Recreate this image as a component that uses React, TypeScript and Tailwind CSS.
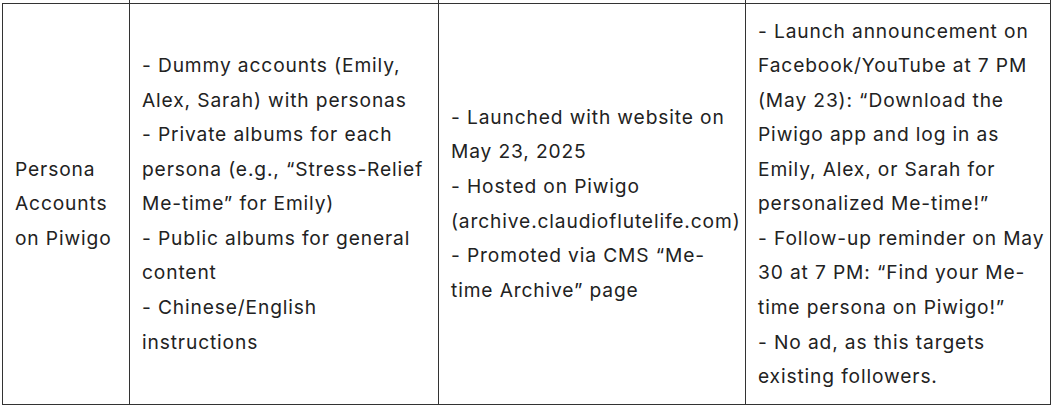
import React from 'react';

// each visual line of the cell, as it wraps in the original
const rows = [
  {
    name: ['Persona', 'Accounts', 'on Piwigo'],
    features: [
      '- Dummy accounts (Emily,',
      'Alex, Sarah) with personas',
      '- Private albums for each',
      'persona (e.g., \u201cStress-Relief',
      'Me-time\u201d for Emily)',
      '- Public albums for general',
      'content',
      '- Chinese/English',
      'instructions',
    ],
    timing: [
      '- Launched with website on',
      'May 23, 2025',
      '- Hosted on Piwigo',
      '(archive.claudioflutelife.com)',
      '- Promoted via CMS \u201cMe-',
      'time Archive\u201d page',
    ],
    promo: [
      '- Launch announcement on',
      'Facebook/YouTube at 7 PM',
      '(May 23): \u201cDownload the',
      'Piwigo app and log in as',
      'Emily, Alex, or Sarah for',
      'personalized Me-time!\u201d',
      '- Follow-up reminder on May',
      '30 at 7 PM: \u201cFind your Me-',
      'time persona on Piwigo!\u201d',
      '- No ad, as this targets',
      'existing followers.',
    ],
  },
];

const cell = 'border border-[#333] px-3 py-[10px] align-middle';

function Lines({ lines }: { lines: string[] }) {
  return (
    <>
      {lines.map((l) => (
        <div key={l} className="whitespace-nowrap">
          {l}
        </div>
      ))}
    </>
  );
}

export default function App() {
  return (
    <div className="w-[1051px] h-[405px] bg-white overflow-hidden pl-[2px] font-['Inter','Liberation_Sans',sans-serif] text-[19.2px] leading-[1.8] tracking-[0.045em] text-[#222]">
      <table className="table-fixed border-collapse w-[1048px]">
        <colgroup>
          <col className="w-[127px]" />
          <col className="w-[309px]" />
          <col className="w-[307px]" />
          <col className="w-[305px]" />
        </colgroup>
        <tbody>
          <tr className="h-[3px]">
            <td className="border-r border-[#333] p-0" />
            <td className="border-r border-[#333] p-0" />
            <td className="border-r border-[#333] p-0" />
            <td className="border-r border-[#333] p-0" />
          </tr>
          {rows.map((r) => (
            <tr key={r.name.join(' ')}>
              <td className={cell}>
                <Lines lines={r.name} />
              </td>
              <td className={cell}>
                <Lines lines={r.features} />
              </td>
              <td className={cell}>
                <Lines lines={r.timing} />
              </td>
              <td className={cell}>
                <Lines lines={r.promo} />
              </td>
            </tr>
          ))}
        </tbody>
      </table>
    </div>
  );
}
